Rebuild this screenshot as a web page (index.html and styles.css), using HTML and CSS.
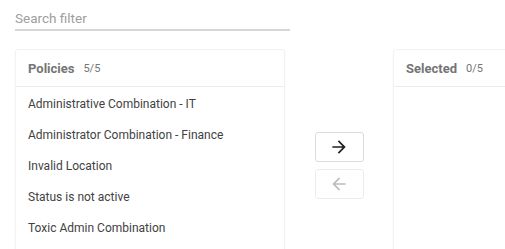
FILE: index.html
```html
<!DOCTYPE html>
<html lang="en">
<head>
    <meta charset="UTF-8">
    <meta name="viewport" content="width=device-width, initial-scale=1.0">
    <title>Policy Picker</title>
    <link rel="stylesheet" href="styles.css">
</head>
<body>
    <div class="picker">
        <div class="search-field">
            <input type="text" class="search-input" placeholder="Search filter">
        </div>

        <div class="lists">
            <div class="list-card">
                <div class="list-header">
                    <span class="list-title">Policies</span>
                    <span class="list-count">5/5</span>
                </div>
                <ul class="list-items">
                    <li>Administrative Combination - IT</li>
                    <li>Administrator Combination - Finance</li>
                    <li>Invalid Location</li>
                    <li>Status is not active</li>
                    <li>Toxic Admin Combination</li>
                </ul>
            </div>

            <div class="transfer">
                <button class="transfer-btn" type="button" aria-label="Add">
                    <svg width="20" height="20" viewBox="0 0 24 24"><path d="M12 4l-1.41 1.41L16.17 11H4v2h12.17l-5.58 5.59L12 20l8-8z" fill="currentColor"/></svg>
                </button>
                <button class="transfer-btn" type="button" aria-label="Remove" disabled>
                    <svg width="20" height="20" viewBox="0 0 24 24"><path d="M20 11H7.83l5.59-5.59L12 4l-8 8 8 8 1.41-1.41L7.83 13H20v-2z" fill="currentColor"/></svg>
                </button>
            </div>

            <div class="list-card">
                <div class="list-header">
                    <span class="list-title">Selected</span>
                    <span class="list-count">0/5</span>
                </div>
                <ul class="list-items"></ul>
            </div>
        </div>
    </div>
</body>
</html>
```

FILE: styles.css
```css
:root {
    --text-color: #424242;
    --muted-color: #757575;
    --line-color: #ececec;
}

body {
    font-family: Roboto, 'Noto Sans', sans-serif;
    color: var(--text-color);
    background: #ffffff;
    margin: 0;
    padding: 0 15px;
    overflow: hidden;
}

.search-field {
    width: 275px;
    padding-top: 10px;
    border-bottom: 2px solid #d6d6d6;
}

.search-input {
    display: block;
    width: 100%;
    border: none;
    outline: none;
    padding: 0 0 3px;
    font-family: inherit;
    font-size: 13.5px;
    line-height: 16px;
    color: var(--text-color);
    background: transparent;
}

.search-input::placeholder {
    color: #9e9e9e;
}

.lists {
    display: flex;
    align-items: center;
    margin-top: 18px;
}

.list-card {
    width: 270px;
    height: 232px;
    flex-shrink: 0;
    box-sizing: border-box;
    border: 1px solid #f2f2f2;
    border-radius: 3px;
    box-shadow: 0 1px 2px rgb(0 0 0 / 0.06);
    background: #ffffff;
}

.list-header {
    height: 36px;
    display: flex;
    align-items: center;
    gap: 9px;
    padding: 0 12px;
    border-bottom: 1px solid var(--line-color);
}

.list-title {
    font-size: 13px;
    font-weight: 700;
    color: var(--muted-color);
}

.list-count {
    font-size: 11px;
    color: var(--muted-color);
}

.list-items {
    list-style: none;
    margin: 0;
    padding: 2px 0 0;
}

.list-items li {
    height: 31px;
    line-height: 31px;
    padding: 0 12px;
    font-size: 12px;
    color: var(--text-color);
}

.transfer {
    width: 108px;
    flex-shrink: 0;
    display: flex;
    flex-direction: column;
    align-items: center;
    gap: 7px;
}

.transfer-btn {
    width: 49px;
    height: 30px;
    display: flex;
    align-items: center;
    justify-content: center;
    padding: 0;
    border: 1px solid #dcdcdc;
    border-radius: 3px;
    background: #ffffff;
    color: #212121;
    cursor: pointer;
}

.transfer-btn:disabled {
    border-color: #ececec;
    color: #bdbdbd;
    cursor: default;
}
```
